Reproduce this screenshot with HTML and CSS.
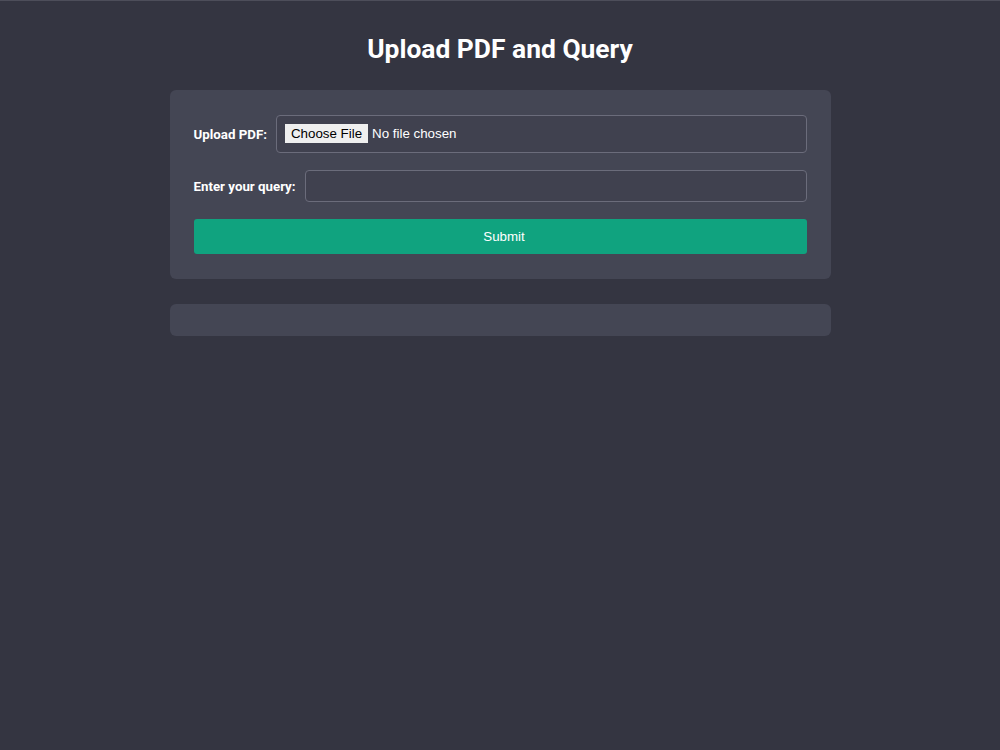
FILE: index.html
```html
<!DOCTYPE html>
<html lang="en">
<head>
    <meta charset="UTF-8">
    <meta name="viewport" content="width=device-width, initial-scale=1.0">
    <title>Upload PDF and Query</title>
    <link rel="stylesheet" href="styles.css">
</head>
<body>
    <div class="page">
        <h1>Upload PDF and Query</h1>
        <form class="card" id="queryForm">
            <div class="row">
                <label for="pdf">Upload PDF:</label>
                <input type="file" id="pdf" class="field file-field" accept="application/pdf">
            </div>
            <div class="row">
                <label for="query">Enter your query:</label>
                <input type="text" id="query" class="field text-field">
            </div>
            <button type="submit" class="submit">Submit</button>
        </form>
        <div class="card result" id="result"></div>
    </div>
</body>
</html>
```

FILE: styles.css
```css
* { margin: 0; padding: 0; box-sizing: border-box; }
body {
    font-family: 'Roboto', sans-serif;
    background: #343541;
    color: #ffffff;
    border-top: 1px solid #4d4e5a;
    min-height: 100vh;
}
.page {
    width: 661px;
    margin: 0 auto;
    padding-top: 32px;
}
h1 {
    font-size: 26.4px;
    font-weight: 700;
    line-height: 32px;
    text-align: center;
    margin-bottom: 25px;
}
.card {
    background: #444654;
    border-radius: 6px;
}
#queryForm {
    padding: 25px 24px 25px;
    display: flex;
    flex-direction: column;
    gap: 17px;
}
.row {
    display: flex;
    align-items: center;
    gap: 9px;
}
label {
    font-size: 13.3px;
    font-weight: 700;
    white-space: nowrap;
}
.field {
    flex: 1;
    background: #40414f;
    border: 1px solid #6b6c7b;
    border-radius: 4px;
    color: #ffffff;
    font-family: 'Liberation Sans', Arial, sans-serif;
    font-size: 13.33px;
}
.file-field {
    height: 38px;
    padding: 8px 8px 0;
}
.file-field::file-selector-button {
    font-family: 'Liberation Sans', Arial, sans-serif;
    font-size: 13.33px;
    background: #efefef;
    color: #000000;
    border: none;
    border-radius: 0;
    padding: 2px 6px;
    margin-right: 4px;
}
.text-field {
    height: 32px;
    padding: 0 8px;
    outline: none;
}
.submit {
    height: 35px;
    background: #10a37f;
    color: #ffffff;
    border: none;
    border-radius: 3px;
    padding-left: 8px;
    font-family: 'Liberation Sans', Arial, sans-serif;
    font-size: 13.33px;
    cursor: pointer;
}
.result {
    margin-top: 25px;
    height: 32px;
}
```
